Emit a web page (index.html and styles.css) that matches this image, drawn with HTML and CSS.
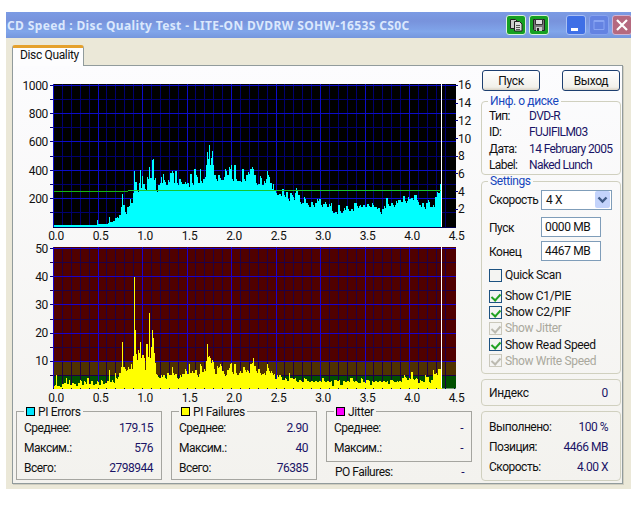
FILE: index.html
```html
<!DOCTYPE html>
<html lang="ru">
<head>
    <meta charset="UTF-8">
    <title>CD Speed : Disc Quality Test</title>
    <link rel="stylesheet" href="styles.css">
</head>
<body>
    <div class="window">
        <div class="titlebar">
            <span class="title">CD Speed : Disc Quality Test - LITE-ON DVDRW SOHW-1653S CS0C</span>
            <div class="tools">
                <svg class="tool" width="20" height="20" viewBox="1 1 18 18">
                    <path d="M4.500 4.500h5l2 2v7h-7z" fill="#ccc" stroke="#222"/>
                    <path d="M8.500 6.500h5l2.500 2.500v7h-7.500z" fill="#ddd" stroke="#222"/>
                    <path d="M10 10.500h4M10 12.500h4M10 14.500h4" stroke="#555"/>
                </svg>
                <svg class="tool" width="20" height="20" viewBox="1 1 18 18">
                    <path d="M4.500 4.500h11v11h-10l-1-1z" fill="#777" stroke="#222"/>
                    <path d="M6.500 4.500h7v5h-7z" fill="#ddd" stroke="#333"/>
                    <path d="M7 12h6v4H7z" fill="#ccc"/>
                    <path d="M8 13h2v3H8z" fill="#222"/>
                </svg>
            </div>
            <div class="controls">
                <svg class="control min" width="20" height="20" viewBox="1 1 18 18"><path d="M5 13h7v3H5z" fill="#fff"/></svg>
                <svg class="control max" width="20" height="20" viewBox="1 1 18 18"><path d="M5 5.500h10v9H5zM5 6.500h10" fill="none" stroke="#88a4f2"/></svg>
                <svg class="control close" width="20" height="20" viewBox="1 1 18 18"><path d="M5 5l10 10M15 5L5 15" stroke="#fff" stroke-width="2.200"/></svg>
            </div>
        </div>
        <div class="client">
            <div class="tab">Disc Quality</div>
            <div class="panel">
                <div class="left">
                    <svg id="charts" width="460" height="339" viewBox="13 66 460 339"></svg>
                    <div class="stats">
                        <fieldset class="stat">
                            <legend><i class="key cyan"></i>PI Errors</legend>
                            <div class="row"><span>Среднее:</span><b>179.15</b></div>
                            <div class="row"><span>Максим.:</span><b>576</b></div>
                            <div class="row"><span>Всего:</span><b>2798944</b></div>
                        </fieldset>
                        <fieldset class="stat">
                            <legend><i class="key yellow"></i>PI Failures</legend>
                            <div class="row"><span>Среднее:</span><b>2.90</b></div>
                            <div class="row"><span>Максим.:</span><b>40</b></div>
                            <div class="row"><span>Всего:</span><b>76385</b></div>
                        </fieldset>
                        <div class="jitter">
                            <fieldset class="stat short">
                                <legend><i class="key magenta"></i>Jitter</legend>
                                <div class="row"><span>Среднее:</span><b>-</b></div>
                                <div class="row"><span>Максим.:</span><b>-</b></div>
                            </fieldset>
                            <div class="row po"><span>PO Failures:</span><b>-</b></div>
                        </div>
                    </div>
                </div>
                <div class="right">
                    <div class="buttons">
                        <button>Пуск</button>
                        <button>Выход</button>
                    </div>
                    <fieldset class="group info">
                        <legend>Инф. о диске</legend>
                        <div class="line"><span>Тип:</span><b>DVD-R</b></div>
                        <div class="line"><span>ID:</span><b>FUJIFILM03</b></div>
                        <div class="line"><span>Дата:</span><b>14 February 2005</b></div>
                        <div class="line"><span>Label:</span><b>Naked Lunch</b></div>
                    </fieldset>
                    <fieldset class="group settings">
                        <legend>Settings</legend>
                        <div class="field"><span>Скорость</span>
                            <div class="select">4 X
                                <svg class="arrow" width="15" height="17" viewBox="0 0 15 17"><path d="M3.500 6.500l4 4 4-4" fill="none" stroke="#3f5a86" stroke-width="2.400"/></svg>
                            </div>
                        </div>
                        <div class="field"><span>Пуск</span><div class="input">0000 MB</div></div>
                        <div class="field"><span>Конец</span><div class="input">4467 MB</div></div>
                        <div class="checks">
                            <div class="check"><i class="box"></i>Quick Scan</div>
                            <div class="check"><i class="box on"></i>Show C1/PIE</div>
                            <div class="check"><i class="box on"></i>Show C2/PIF</div>
                            <div class="check disabled"><i class="box on"></i>Show Jitter</div>
                            <div class="check"><i class="box on"></i>Show Read Speed</div>
                            <div class="check disabled"><i class="box on"></i>Show Write Speed</div>
                        </div>
                    </fieldset>
                    <div class="group index">
                        <div class="row"><span>Индекс</span><b>0</b></div>
                    </div>
                    <div class="group progress">
                        <div class="row"><span>Выполнено:</span><b>100 %</b></div>
                        <div class="row"><span>Позиция:</span><b>4466 MB</b></div>
                        <div class="row"><span>Скорость:</span><b>4.00 X</b></div>
                    </div>
                </div>
            </div>
        </div>
    </div>
    <script src="charts.js"></script>
</body>
</html>
```
FILE: styles.css
```css
* {
    box-sizing: border-box;
}
body {
    margin: 0;
    background: #fff;
    font: 12px/14px Roboto, "Liberation Sans", sans-serif;
    letter-spacing: -0.35px;
    color: #111;
    overflow: hidden;
}
b {
    font-weight: normal;
    color: #1a1466;
}
fieldset {
    margin: 0;
    min-width: 0;
}
.window {
    margin: 12px 0 0 6px;
    width: 625px;
    height: 477px;
    background: #ebe8d8;
    overflow: hidden;
}
.titlebar {
    display: flex;
    align-items: center;
    height: 26px;
    background: linear-gradient(#7b9be4, #7893dc 35%, #80a5ea 75%, #7596dd);
}
.title {
    width: 501px;
    padding-left: 1px;
    flex: none;
    font: bold 12px "Noto Sans", sans-serif;
    letter-spacing: 0.37px;
    white-space: nowrap;
    color: #dbe8fd;
}
.tools {
    display: flex;
    gap: 3px;
    flex: none;
    width: 60px;
    margin-left: -1px;
}
.tool {
    background: #16a022;
    border: 1px solid #d9f2dc;
    border-radius: 3px;
}
.controls {
    display: flex;
    gap: 3px;
}
.control {
    flex: none;
    border: 1px solid #a9c0f5;
    border-radius: 3px;
}
.min {
    background: #3e6fe6;
}
.max {
    background: #6483e2;
    border-color: #86a2ef;
}
.close {
    background: #b5697f;
    border-color: #d0b3d2;
}
.client {
    padding: 7px 0 0 6px;
}
.tab {
    position: relative;
    width: 72px;
    height: 21px;
    margin-bottom: -1px;
    padding-left: 7px;
    border: 1px solid #919b9c;
    border-top: 3px solid #e5a12d;
    border-bottom: none;
    border-radius: 3px 3px 0 0;
    background: #fdfdfe;
    white-space: nowrap;
}
.panel {
    display: flex;
    width: 611px;
    height: 419px;
    border: 1px solid #919b9c;
    background: linear-gradient(#fcfcfe, #f3f2ee);
    box-shadow: 1px 1px 0 #cfcdbf;
}
.left {
    width: 468px;
    flex: none;
}
#charts {
    display: block;
}
.axis {
    font-size: 12px;
    fill: #111;
}
.stats {
    display: flex;
    gap: 9px;
    padding-left: 3px;
}
.stat {
    width: 146px;
    height: 75px;
    padding: 0 8px 0 7px;
    border: 1px solid #a5a5a0;
}
.stat .row,
.po {
    letter-spacing: -0.5px;
}
.short {
    height: 57px;
}
.stat legend {
    display: flex;
    align-items: center;
    height: 13px;
    padding: 0 2px;
}
.key {
    width: 9px;
    height: 9px;
    margin-right: 3px;
    border: 1px solid #000;
}
.cyan {
    background: #00e5ff;
}
.yellow {
    background: #ff0;
}
.magenta {
    background: #f0f;
}
.row {
    display: flex;
    align-items: center;
    justify-content: space-between;
    height: 20px;
}
.jitter {
    width: 146px;
}
.po {
    padding: 0 8px 0 9px;
}
.right {
    width: 140px;
    flex: none;
    padding-top: 4px;
}
.buttons {
    display: flex;
    justify-content: space-between;
    padding: 0 1px;
}
button {
    width: 58px;
    height: 21px;
    padding: 0;
    border: 1px solid #1d3f70;
    border-radius: 3px;
    background: linear-gradient(#fff, #f1f0ea 85%, #d8d2c4);
    font: inherit;
    letter-spacing: inherit;
    color: #111;
}
.group {
    width: 140px;
    padding: 0 7px;
    border: 1px solid #d0d0bf;
    border-radius: 4px;
}
.group legend {
    height: 12px;
    padding: 0 2px;
    margin-left: -1px;
    line-height: 13px;
    letter-spacing: -0.4px;
    color: #1646bd;
}
.info {
    height: 80px;
    margin-top: 4px;
}
.line {
    display: flex;
    height: 16.300px;
    line-height: 18px;
    letter-spacing: -0.6px;
    white-space: nowrap;
}
.line span {
    width: 40px;
    flex: none;
}
.settings {
    height: 199px;
}
.field {
    display: flex;
    align-items: center;
    height: 24px;
    padding-top: 1px;
}
.field:nth-of-type(1) {
    margin-bottom: 3px;
}
.field span {
    width: 52px;
    flex: none;
    letter-spacing: -0.5px;
}
.field + .field span {
    padding-top: 3px;
}
.select,
.input {
    display: flex;
    align-items: center;
    justify-content: space-between;
    width: 60px;
    height: 20px;
    padding-left: 3px;
    border: 1px solid #7f9db9;
    background: #fff;
}
.select {
    width: 71px;
    padding-right: 1px;
    padding-left: 4px;
}
.arrow {
    background: #c3d3fb;
    border-radius: 2px;
}
.checks {
    padding-top: 4px;
}
.check {
    display: flex;
    align-items: center;
    height: 16.200px;
    white-space: nowrap;
}
.check:first-child {
    height: 18px;
    margin-bottom: 4px;
}
.box {
    width: 13px;
    height: 13px;
    margin-right: 3px;
    border: 1px solid #1d5281;
    background: #f4f4f2;
}
.on::before {
    content: "";
    display: block;
    width: 4px;
    height: 7px;
    margin: 1px 0 0 3px;
    border: solid #21a121;
    border-width: 0 2px 2px 0;
    transform: rotate(42deg);
}
.disabled {
    color: #aaa99d;
}
.disabled .box {
    border-color: #cac8bb;
}
.disabled .on::before {
    border-color: #bcbab0;
}
.index {
    height: 27px;
    margin-top: 5px;
    padding: 3px 12px 0 7px;
}
.progress {
    height: 70px;
    margin-top: 5px;
    padding: 5px 12px 0 7px;
}
.progress .row {
    letter-spacing: -0.5px;
}
```
FILE: charts.js
```js
// x, height pairs; columns in between repeat the last height with a little noise
const pie = [54,2,97,7,98,3,108,4,109,10,110,5,113,6,115,9,117,10,119,12,121,20,122,33,123,22,125,15,127,20,129,21,130,28,131,24,133,34,134,56,135,45,137,37,139,44,140,57,141,39,142,51,143,43,145,38,147,50,148,48,149,60,150,49,152,67,153,68,154,47,155,49,156,37,158,42,160,44,161,50,162,44,163,53,164,47,166,42,168,47,170,54,172,56,174,44,175,56,177,44,179,48,181,45,183,43,185,45,187,44,189,40,190,53,192,44,194,58,196,52,198,44,200,58,201,46,203,48,205,50,206,62,207,75,208,68,209,82,210,62,211,69,212,76,213,62,214,52,216,48,218,52,220,49,222,47,224,50,225,58,227,52,229,60,231,62,232,48,234,62,236,48,238,46,241,45,242,58,244,48,246,52,248,55,250,58,252,60,254,52,256,44,258,43,260,51,262,42,264,46,266,48,267,56,268,52,270,44,272,38,273,43,274,36,276,34,279,33,282,38,284,32,286,35,288,28,290,34,292,32,294,27,295,34,296,39,297,36,298,32,300,25,302,24,304,30,306,24,308,22,311,25,313,22,315,24,317,28,321,22,323,23,325,25,327,20,329,23,331,24,332,16,335,15,338,22,340,16,344,19,346,21,348,18,354,24,357,21,360,22,367,23,370,20,372,24,374,20,378,19,380,15,382,18,384,21,386,29,388,23,391,24,393,22,396,26,398,27,403,31,405,26,408,30,411,29,414,32,417,27,419,22,422,24,424,20,426,24,428,27,430,20,433,22,435,30,437,35,438,34,440,43];
const pif = [54,3,55,4,56,14,57,3,60,2,62,5,64,6,66,11,67,5,69,9,70,4,72,6,74,5,76,3,78,6,80,9,82,4,84,8,86,5,87,11,89,5,91,8,93,4,95,5,97,8,99,4,101,9,103,5,105,6,107,8,109,19,110,7,112,9,113,7,115,16,116,11,118,12,119,16,121,22,122,47,123,22,125,20,127,19,128,22,131,25,132,20,133,33,134,112,135,59,136,35,137,29,138,39,139,36,140,47,141,31,142,34,144,31,145,19,146,45,147,45,148,32,149,76,150,31,151,42,152,59,153,51,154,36,155,26,156,15,157,14,159,11,161,14,165,11,167,16,171,14,172,22,173,16,175,15,177,11,180,14,182,15,185,20,187,15,189,25,190,16,192,18,195,19,197,14,199,15,200,25,202,17,204,20,206,28,207,45,208,32,209,33,211,26,212,29,214,20,215,15,217,23,219,22,220,25,222,18,224,15,226,14,227,19,229,21,230,25,231,26,232,17,234,25,236,16,240,18,243,22,245,19,248,18,250,25,252,26,253,31,254,23,256,18,258,20,260,16,262,15,264,16,266,18,267,25,268,21,269,18,272,16,274,15,275,10,277,14,282,9,285,11,287,8,289,16,290,11,296,8,299,9,302,7,304,11,307,8,322,11,324,8,332,3,334,9,340,4,343,8,350,11,353,8,358,6,361,11,363,7,366,9,370,4,372,8,388,5,390,9,394,7,397,8,402,11,404,14,405,12,407,9,409,11,411,17,413,10,416,11,418,6,420,9,423,7,425,14,427,12,429,7,431,9,433,19,434,15,436,16,438,20];

let out = '';

function rect(x, y, w, h, fill) {
    out += `<rect x="${x}" y="${y}" width="${w}" height="${h}" fill="${fill}"/>`;
}

function label(x, y, text, anchor) {
    out += `<text class="axis" x="${x}" y="${y}" text-anchor="${anchor}">${text}</text>`;
}

function grid(top, bottom, minor, major) {
    for (let i = 0; i <= 45; i++) {
        if (i % 5) rect(Math.round(53 + i * 8.9), top, 1, bottom - top, minor);
    }
    for (let i = 0; i < 10; i++) {
        rect(50, Math.round(top + 1 + i * 14.1), i % 2 ? 406 : 3, 1, i % 2 ? minor : '#000080');
    }
    for (let i = 0; i < 10; i += 2) {
        rect(53, Math.round(top + 1 + i * 14.1), 403, 1, major);
    }
    for (let i = 0; i <= 40; i += 5) {
        rect(Math.round(53 + i * 8.9), top, 1, bottom - top, major);
    }
}

function bars(data, base, fill) {
    let h = 0, k = 0, d = `M54 ${base}`;
    for (let x = 54; x < 442; x++) {
        let v;
        if (data[k] === x) {
            h = v = data[k + 1];
            k += 2;
        } else {
            v = h - (x * 7 % 4 > 1 ? Math.min(2, Math.floor(h / 7)) : 0);
        }
        d += `V${base - v}H${x + 1}`;
    }
    out += `<path d="${d}V${base}z" fill="${fill}" shape-rendering="crispEdges"/>`;
}

function xLabels(y) {
    for (let i = 0; i <= 9; i++) {
        label(56 + i * 44.5, y, (i / 2).toFixed(1), 'middle');
    }
}

// PI errors and read speed
rect(53, 84, 403, 143, '#000');
grid(84, 227, '#000070', '#0c0cc8');
bars(pie, 227, '#0ff');
rect(54, 191, 74, 1, '#12b412');
rect(128, 190, 313, 1, '#12c832');
rect(441, 84, 1, 143, '#fff');
rect(53, 227, 403, 1, '#000050');
for (let i = 1; i <= 5; i++) label(48, 231 - i * 28.2, i * 200, 'end');
for (let i = 1; i <= 8; i++) {
    rect(455, Math.round(226.500 - i * 17.7), 3, 1, '#000080');
    label(458, 231 - i * 17.7, i * 2, 'start');
}
xLabels(240);

// PI failures
rect(53, 247, 403, 114, '#500000');
rect(53, 361, 403, 15, '#503200');
rect(53, 376, 403, 12.500, '#005000');
grid(247, 388, '#1e0046', '#1a00cc');
bars(pif, 388.500, '#ff0');
rect(441, 247, 1, 141, '#fff');
for (let i = 0; i <= 45; i++) rect(Math.round(53 + i * 8.9), 388, 1, 1, '#000050');
for (let i = 1; i <= 5; i++) label(48, 393.500 - i * 28.2, i * 10, 'end');
xLabels(402);

document.getElementById('charts').innerHTML = out;
```
